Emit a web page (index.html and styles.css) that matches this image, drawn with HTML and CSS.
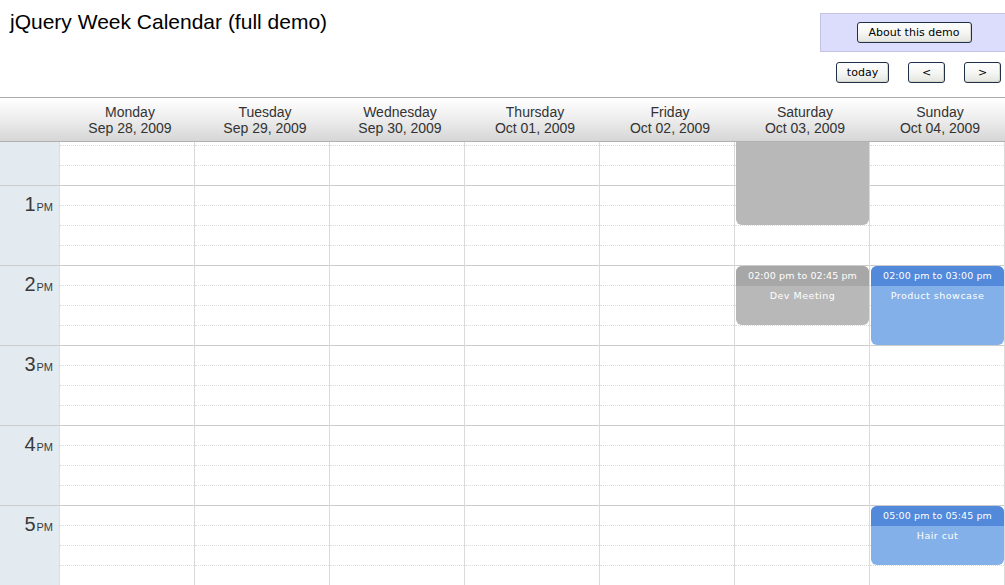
FILE: index.html
```html
<!DOCTYPE html>
<html>
<head>
<meta charset="utf-8">
<title>jQuery Week Calendar (full demo)</title>
<link rel="stylesheet" href="styles.css">
</head>
<body>
<div class="top">
  <h1 class="title">jQuery Week Calendar (full demo)</h1>
  <div class="controls">
    <div class="about"><button class="btn btn-about">About this demo</button></div>
    <div class="nav">
      <button class="btn btn-today">today</button>
      <button class="btn btn-arrow">&lt;</button>
      <button class="btn btn-arrow">&gt;</button>
    </div>
  </div>
</div>
<div class="cal">
  <div class="cal-head">
    <div class="head-gutter"></div>
    <div class="day-head">Monday<br>Sep 28, 2009</div>
    <div class="day-head">Tuesday<br>Sep 29, 2009</div>
    <div class="day-head">Wednesday<br>Sep 30, 2009</div>
    <div class="day-head">Thursday<br>Oct 01, 2009</div>
    <div class="day-head">Friday<br>Oct 02, 2009</div>
    <div class="day-head">Saturday<br>Oct 03, 2009</div>
    <div class="day-head">Sunday<br>Oct 04, 2009</div>
  </div>
  <div class="cal-body">
    <div class="cal-grid">
      <div class="times">
        <div class="time-slot"></div>
        <div class="time-slot"><span class="hr">1</span><span class="ampm">PM</span></div>
        <div class="time-slot"><span class="hr">2</span><span class="ampm">PM</span></div>
        <div class="time-slot"><span class="hr">3</span><span class="ampm">PM</span></div>
        <div class="time-slot"><span class="hr">4</span><span class="ampm">PM</span></div>
        <div class="time-slot"><span class="hr">5</span><span class="ampm">PM</span></div>
      </div>
      <div class="day">
        <div class="hour"><i></i><i></i><i></i><i></i></div><div class="hour"><i></i><i></i><i></i><i></i></div><div class="hour"><i></i><i></i><i></i><i></i></div><div class="hour"><i></i><i></i><i></i><i></i></div><div class="hour"><i></i><i></i><i></i><i></i></div><div class="hour"><i></i><i></i><i></i><i></i></div>
      </div>
      <div class="day">
        <div class="hour"><i></i><i></i><i></i><i></i></div><div class="hour"><i></i><i></i><i></i><i></i></div><div class="hour"><i></i><i></i><i></i><i></i></div><div class="hour"><i></i><i></i><i></i><i></i></div><div class="hour"><i></i><i></i><i></i><i></i></div><div class="hour"><i></i><i></i><i></i><i></i></div>
      </div>
      <div class="day">
        <div class="hour"><i></i><i></i><i></i><i></i></div><div class="hour"><i></i><i></i><i></i><i></i></div><div class="hour"><i></i><i></i><i></i><i></i></div><div class="hour"><i></i><i></i><i></i><i></i></div><div class="hour"><i></i><i></i><i></i><i></i></div><div class="hour"><i></i><i></i><i></i><i></i></div>
      </div>
      <div class="day">
        <div class="hour"><i></i><i></i><i></i><i></i></div><div class="hour"><i></i><i></i><i></i><i></i></div><div class="hour"><i></i><i></i><i></i><i></i></div><div class="hour"><i></i><i></i><i></i><i></i></div><div class="hour"><i></i><i></i><i></i><i></i></div><div class="hour"><i></i><i></i><i></i><i></i></div>
      </div>
      <div class="day">
        <div class="hour"><i></i><i></i><i></i><i></i></div><div class="hour"><i></i><i></i><i></i><i></i></div><div class="hour"><i></i><i></i><i></i><i></i></div><div class="hour"><i></i><i></i><i></i><i></i></div><div class="hour"><i></i><i></i><i></i><i></i></div><div class="hour"><i></i><i></i><i></i><i></i></div>
      </div>
      <div class="day">
        <div class="hour"><i></i><i></i><i></i><i></i></div><div class="hour"><i></i><i></i><i></i><i></i></div><div class="hour"><i></i><i></i><i></i><i></i></div><div class="hour"><i></i><i></i><i></i><i></i></div><div class="hour"><i></i><i></i><i></i><i></i></div><div class="hour"><i></i><i></i><i></i><i></i></div>
        <div class="event gray" style="top:0px;height:120px"></div>
        <div class="event gray" style="top:161px;height:59px">
          <div class="ev-time">02:00 pm to 02:45 pm</div>
          <div class="ev-title">Dev Meeting</div>
        </div>
      </div>
      <div class="day">
        <div class="hour"><i></i><i></i><i></i><i></i></div><div class="hour"><i></i><i></i><i></i><i></i></div><div class="hour"><i></i><i></i><i></i><i></i></div><div class="hour"><i></i><i></i><i></i><i></i></div><div class="hour"><i></i><i></i><i></i><i></i></div><div class="hour"><i></i><i></i><i></i><i></i></div>
        <div class="event blue" style="top:161px;height:79px">
          <div class="ev-time">02:00 pm to 03:00 pm</div>
          <div class="ev-title">Product showcase</div>
        </div>
        <div class="event blue" style="top:401px;height:59px">
          <div class="ev-time">05:00 pm to 05:45 pm</div>
          <div class="ev-title">Hair cut</div>
        </div>
      </div>
    </div>
  </div>
</div>
</body>
</html>
```

FILE: styles.css
```css
* { box-sizing: border-box; }
html, body { margin: 0; padding: 0; background: #fff; }
body {
  width: 1005px;
  height: 585px;
  overflow: hidden;
  font-family: "Liberation Sans", Arial, sans-serif;
  color: #000;
}

.top {
  display: flex;
  justify-content: space-between;
  align-items: flex-start;
  height: 97px;
}
.title {
  margin: 10px 0 0 10px;
  font-size: 21px;
  font-weight: normal;
  line-height: 24px;
  color: #000;
}
.controls {
  width: 185px;
  display: flex;
  flex-direction: column;
}
.about {
  margin-top: 13px;
  height: 39px;
  background: #dcdcfd;
  border: 1px solid #c4c4e2;
  border-right: none;
  display: flex;
  justify-content: center;
  padding: 8px 0 0 2px;
}
.nav {
  margin-top: 10px;
  display: flex;
  justify-content: flex-end;
  gap: 19px;
  padding-right: 4px;
}
.btn {
  font-family: "DejaVu Sans", Tahoma, sans-serif;
  font-size: 11px;
  color: #000;
  height: 21px;
  padding: 0;
  border: 1px solid #1f3048;
  border-radius: 3px;
  background: linear-gradient(#ffffff 0%, #f6f6f4 50%, #e4e4de 100%);
  box-shadow: inset -1px -1px 0 #d6d6cc;
  cursor: pointer;
}
.btn-about { width: 115px; }
.btn-today { width: 53px; }
.btn-arrow { width: 37px; }

.cal {
  border-top: 1px solid #a9a9a9;
}
.cal-head {
  display: flex;
  height: 44px;
  border-bottom: 1px solid #b0b0b0;
  background: linear-gradient(#ffffff 0%, #efefef 45%, #d6d6d6 100%);
}
.head-gutter { width: 60px; flex: none; }
.day-head {
  width: 135px;
  flex: none;
  text-align: center;
  font-size: 14px;
  line-height: 16px;
  padding: 6px 0 0 5px;
  color: #333;
}

.cal-body {
  height: 443px;
  overflow: hidden;
}
.cal-grid {
  display: flex;
  margin-top: -37px;
}
.times {
  width: 60px;
  flex: none;
  background: #e4ebf0;
  border-right: 1px solid #d8dfe4;
}
.time-slot {
  height: 80px;
  border-top: 1px solid #cccccc;
  text-align: right;
  padding: 7px 6px 0 0;
  color: #3a3a3a;
}
.hr { font-size: 20px; line-height: 22px; }
.ampm { font-size: 11px; margin-left: 1px; }

.day {
  width: 135px;
  flex: none;
  position: relative;
  border-right: 1px solid #dadada;
}
.hour {
  height: 80px;
  display: flex;
  flex-direction: column;
}
.hour i {
  display: block;
  height: 20px;
  border-top: 1px dotted #dddddd;
}
.hour i:first-child { border-top: 1px solid #cccccc; }

.event {
  position: absolute;
  left: 1px;
  right: 0;
  border-radius: 6px;
  color: #fff;
  font-family: "DejaVu Sans", Verdana, sans-serif;
  font-size: 9.5px;
  text-align: center;
  overflow: hidden;
}
.event.gray { background: #b8b8b8; }
.event.blue { background: #83b0e8; }
.ev-time {
  height: 20px;
  line-height: 19px;
  letter-spacing: 0.1px;
}
.gray .ev-time { background: #a7a7a7; }
.blue .ev-time { background: #5289da; }
.ev-title {
  padding-top: 4px;
  letter-spacing: 0.5px;
  color: #ffffff;
}
```
